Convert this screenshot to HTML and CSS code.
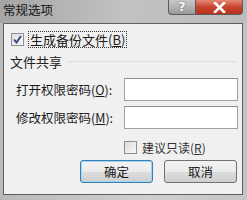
FILE: index.html
```html
<!DOCTYPE html>
<html lang="zh-CN">
<head>
  <meta charset="UTF-8">
  <title>常规选项</title>
  <link rel="stylesheet" href="styles.css">
</head>
<body>

  <div class="window">
    <!-- Title bar -->
    <div class="titlebar">
      <span class="title">常规选项</span>
      <div class="caption-buttons">
        <span class="cap help">?</span>
        <span class="cap close">
          <svg width="13" height="11" viewBox="0 0 13 11">
            <path d="M2 1 L11 10 M11 1 L2 10" stroke="#fff" stroke-width="2.6" stroke-linecap="square"/>
          </svg>
        </span>
      </div>
    </div>

    <!-- Client area -->
    <div class="client">
      <div class="backup-row">
        <span class="checkbox checked">
          <svg width="9" height="9" viewBox="0 0 9 9">
            <path d="M1 4.5 L3.5 7.5 L8 1" fill="none" stroke="#2b3f7a" stroke-width="1.8"/>
          </svg>
        </span>
        <span class="focus">生成备份文件(<u>B</u>)</span>
      </div>

      <div class="group">
        <span class="group-title">文件共享</span>
        <span class="group-line"></span>
      </div>

      <div class="field">
        <label>打开权限密码(<u>O</u>):</label>
        <input class="textbox" type="password">
      </div>
      <div class="field">
        <label>修改权限密码(<u>M</u>):</label>
        <input class="textbox" type="password">
      </div>

      <div class="readonly-row">
        <span class="checkbox"></span>
        <span>建议只读(<u>R</u>)</span>
      </div>

      <div class="actions">
        <button class="btn default">确定</button>
        <button class="btn">取消</button>
      </div>
    </div>
  </div>

</body>
</html>
```

FILE: styles.css
```css
/* Page */
body {
  margin: 0;
  font-family: "Noto Sans CJK SC", "Liberation Sans", sans-serif;
  font-size: 12px;
  color: #1a1a1a;
}

/* Window frame */
.window {
  width: 247px;
  height: 200px;
  background: linear-gradient(90deg, #b9b9b9, #cfcfcf 60%, #c4c4c4);
  box-sizing: border-box;
  display: flex;
  flex-direction: column;
}

/* Title bar */
.titlebar {
  height: 23px;
  display: flex;
  align-items: flex-start;
  background: linear-gradient(90deg, #a5a5a5, #c2c2c2 50%, #bcbcbc);
}
.title {
  font-size: 12.5px;
  line-height: 14px;
  padding: 3px 0 0 3px;
  color: #141414;
}
.caption-buttons {
  margin-left: auto;
  margin-right: 4px;
  display: flex;
}
.cap {
  height: 15px;
  display: flex;
  align-items: center;
  justify-content: center;
  border: 1px solid #5b5b5b;
  border-top: none;
  box-sizing: border-box;
}
.cap.help {
  width: 28px;
  border-radius: 0 0 0 4px;
  background: linear-gradient(#c9c9c9, #9a9a9a);
  color: #fff;
  font-family: "DejaVu Sans", sans-serif;
  font-weight: bold;
  font-size: 12px;
  text-shadow: 0 0 2px #555;
}
.cap.close {
  width: 47px;
  border-left: none;
  border-radius: 0 0 4px 0;
  background: linear-gradient(#e38b76, #c8432e 50%, #b9321e);
}

/* Client area */
.client {
  flex: 1;
  margin: 0 4px 5px 3px;
  border: 1px solid #5f5f5f;
  background: #f0f0f0;
  padding: 7px 0 0 7px;
}

.backup-row {
  display: flex;
  align-items: center;
  gap: 4px;
  height: 17px;
}
.focus {
  border: 1px dotted #333;
  padding: 0 1px;
  line-height: 15px;
  font-size: 13px;
}

.checkbox {
  width: 11px;
  height: 11px;
  border: 1px solid #8e8f8f;
  background: linear-gradient(135deg, #dcdcdc, #f8f8f8);
  display: flex;
  align-items: center;
  justify-content: center;
}

/* Group header with separator */
.group {
  display: flex;
  align-items: center;
  margin: 6px 6px 0 -1px;
  height: 15px;
}
.group-title {
  font-size: 13px;
  color: #222;
}
.group-line {
  flex: 1;
  height: 0;
  border-top: 1px solid #d5dfe5;
  margin-left: 6px;
}

/* Password fields */
.field {
  display: flex;
  align-items: center;
  margin: 9px 4px 0 5px;
}
.field + .field {
  margin-top: 5px;
}
.field label {
  width: 108px;
  font-size: 12.5px;
}
.textbox {
  width: 114px;
  height: 23px;
  box-sizing: border-box;
  border: 1px solid #a0a0a0;
  border-top-color: #8f8f8f;
  background: #fff;
  margin: 0;
}

/* Read-only recommendation */
.readonly-row {
  display: flex;
  align-items: center;
  gap: 5px;
  margin: 11px 0 0 113px;
  height: 14px;
  color: #333;
}

/* Buttons */
.actions {
  display: flex;
  justify-content: flex-end;
  gap: 11px;
  margin: 6px 5px 0 0;
}
.btn {
  width: 73px;
  height: 23px;
  font: inherit;
  font-size: 12.5px;
  color: #1a1a1a;
  border: 1px solid #707070;
  border-radius: 3px;
  background: linear-gradient(#f2f2f2, #ebebeb 50%, #dddddd 51%, #cfcfcf);
  padding: 0;
}
.btn.default {
  border-color: #3c7fb1;
  box-shadow: inset 0 0 0 1px #9fd5f4;
}
```
